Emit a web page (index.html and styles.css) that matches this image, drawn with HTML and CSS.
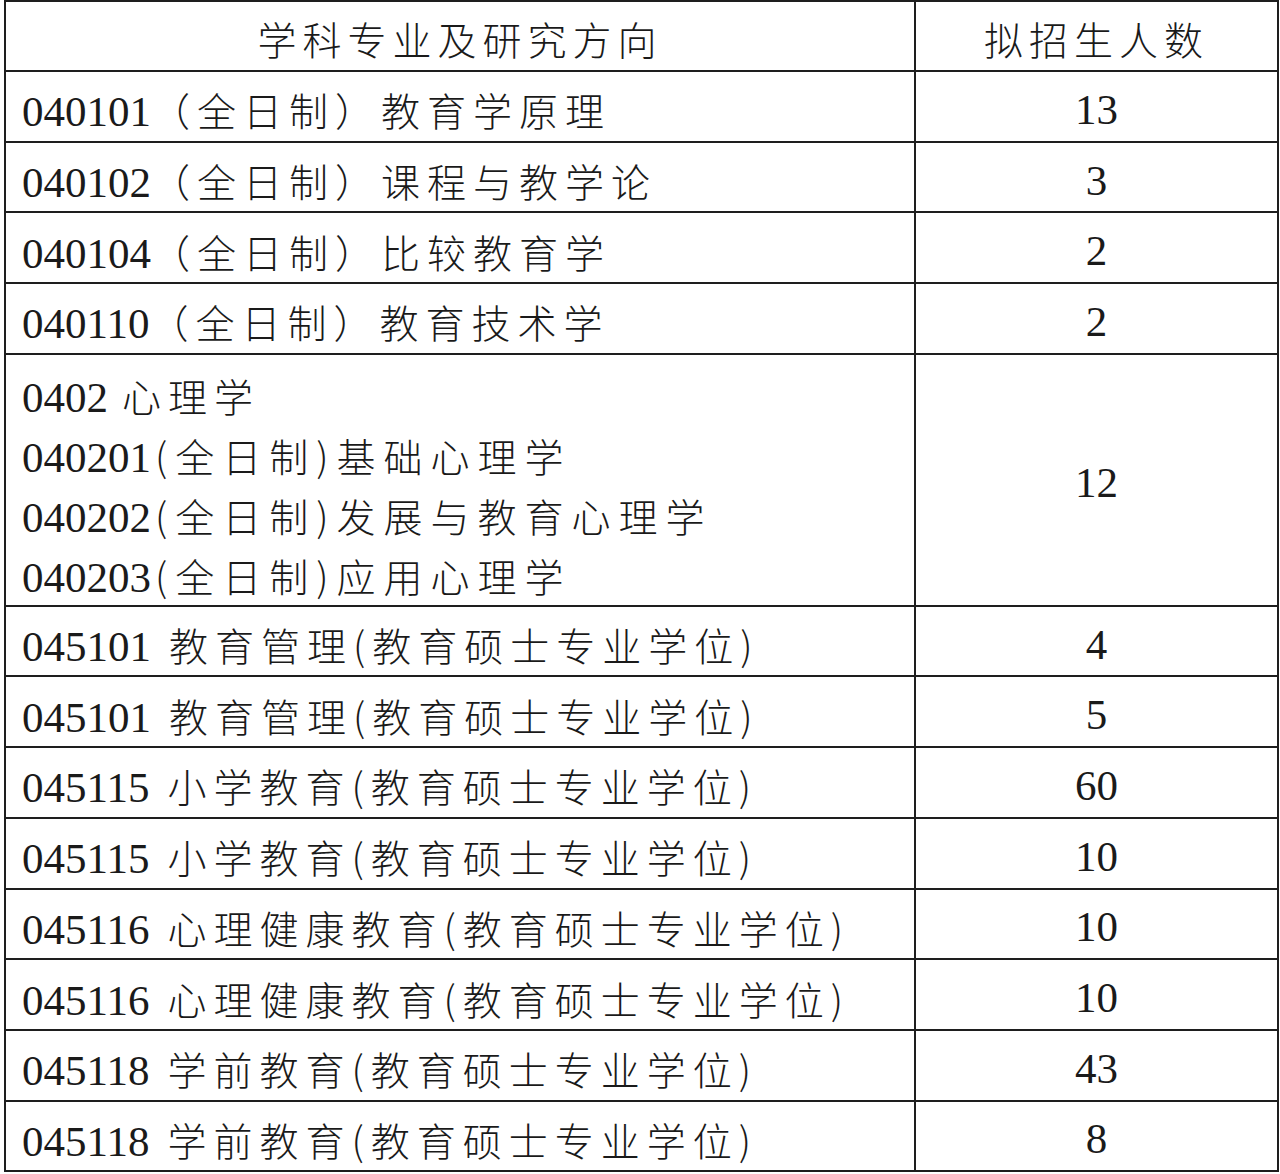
FILE: index.html
```html
<!DOCTYPE html>
<html lang="zh-CN">
<head>
<meta charset="utf-8">
<title>拟招生人数</title>
<link rel="stylesheet" href="styles.css">
</head>
<body>
<table class="plan">
  <thead>
    <tr class="head-row">
      <th class="col-major"><span class="cn">学科专业及研究方向</span></th>
      <th class="col-num"><span class="cn">拟招生人数</span></th>
    </tr>
  </thead>
  <tbody>
    <tr><td class="major"><span class="code">040101</span><span class="cn">（全日制）教育学原理</span></td><td class="num">13</td></tr>
    <tr><td class="major"><span class="code">040102</span><span class="cn">（全日制）课程与教学论</span></td><td class="num">3</td></tr>
    <tr><td class="major"><span class="code">040104</span><span class="cn">（全日制）比较教育学</span></td><td class="num">2</td></tr>
    <tr><td class="major"><span class="code">040110</span><span class="cn">（全日制）教育技术学</span></td><td class="num">2</td></tr>
    <tr class="tall-row">
      <td class="major multi">
        <div class="line"><span class="code">0402</span><span class="cn gap-s">心理学</span></div>
        <div class="line"><span class="code">040201</span><span class="cn wide">(全日制)基础心理学</span></div>
        <div class="line"><span class="code">040202</span><span class="cn wide">(全日制)发展与教育心理学</span></div>
        <div class="line"><span class="code">040203</span><span class="cn wide">(全日制)应用心理学</span></div>
      </td>
      <td class="num">12</td>
    </tr>
    <tr><td class="major"><span class="code">045101</span><span class="cn gap">教育管理(教育硕士专业学位)</span></td><td class="num">4</td></tr>
    <tr><td class="major"><span class="code">045101</span><span class="cn gap">教育管理(教育硕士专业学位)</span></td><td class="num">5</td></tr>
    <tr><td class="major"><span class="code">045115</span><span class="cn gap">小学教育(教育硕士专业学位)</span></td><td class="num">60</td></tr>
    <tr><td class="major"><span class="code">045115</span><span class="cn gap">小学教育(教育硕士专业学位)</span></td><td class="num">10</td></tr>
    <tr><td class="major"><span class="code">045116</span><span class="cn gap">心理健康教育(教育硕士专业学位)</span></td><td class="num">10</td></tr>
    <tr><td class="major"><span class="code">045116</span><span class="cn gap">心理健康教育(教育硕士专业学位)</span></td><td class="num">10</td></tr>
    <tr><td class="major"><span class="code">045118</span><span class="cn gap">学前教育(教育硕士专业学位)</span></td><td class="num">43</td></tr>
    <tr><td class="major"><span class="code">045118</span><span class="cn gap">学前教育(教育硕士专业学位)</span></td><td class="num">8</td></tr>
  </tbody>
</table>
</body>
</html>
```
FILE: styles.css
```css
html, body {
  margin: 0;
  padding: 0;
  background: #ffffff;
}

body {
  color: #1a1a1a;
  font-family: "Liberation Serif", "Noto Sans CJK SC", serif;
}

.plan {
  margin: 0 0 0 4px;
  width: 1275px;
  border-collapse: collapse;
  table-layout: fixed;
}

.plan th,
.plan td {
  border: 2px solid #1e1e1e;
  padding: 0;
  vertical-align: middle;
}

.col-major {
  width: 908px;
}

.head-row {
  height: 70px;
}

.plan th {
  font-weight: normal;
  text-align: center;
  padding-top: 4px;
}

.plan tbody tr {
  height: 70.7px;
}

.plan tbody tr.tall-row {
  height: 251px;
}

.major {
  text-align: left;
  padding-left: 16px !important;
  padding-top: 6px !important;
  white-space: nowrap;
}

.major.multi {
  vertical-align: top;
  padding-top: 10px !important;
}

.line {
  line-height: 60px;
  height: 60px;
}

.code {
  font-family: "Liberation Serif", serif;
  font-size: 43px;
  letter-spacing: 0;
}

.cn {
  font-family: "Noto Sans CJK SC", sans-serif;
  font-weight: 300;
  font-size: 39px;
  letter-spacing: 7px;
}

.cn.wide {
  letter-spacing: 8px;
  margin-left: 4px;
}

.cn.gap {
  margin-left: 18px;
}

.cn.gap-s {
  margin-left: 14px;
}

.plan th .cn {
  font-size: 39px;
  letter-spacing: 6px;
}

.num {
  text-align: center;
  font-family: "Liberation Serif", serif;
  font-size: 43px;
  padding-top: 6px !important;
}
```
